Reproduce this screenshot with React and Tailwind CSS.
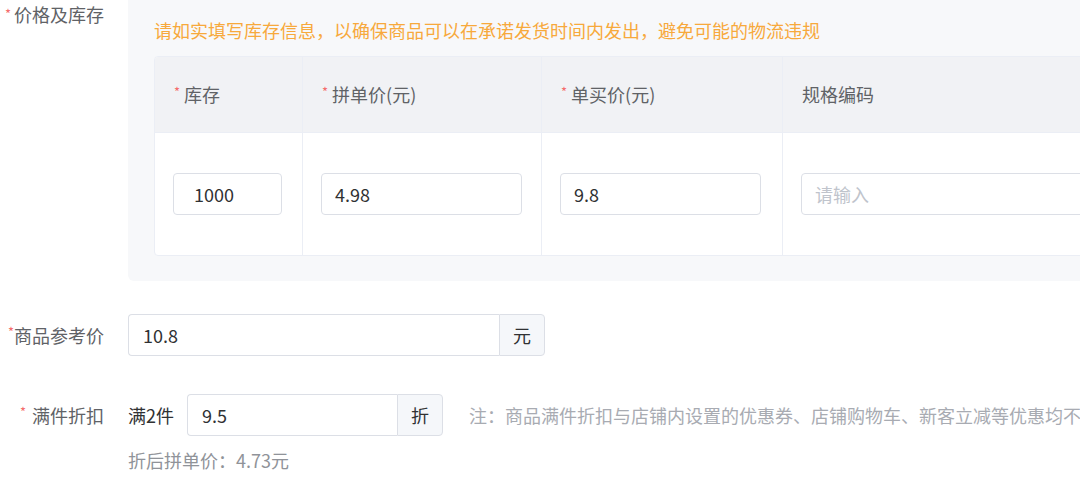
import React from "react";

const font = {
  fontFamily: '"Noto Sans CJK SC", "Noto Sans", sans-serif',
};

const Star = ({ className = "" }) => (
  <span className={`text-[#f56c6c] text-[13px] align-top ${className}`}>*</span>
);

const Field = ({ value, placeholder, width, pad = "px-[13px]" }) => (
  <div
    className={`h-[42px] ${width} ${pad} flex items-center bg-white border border-[#dcdfe6] rounded-[4px] text-[18px]`}
  >
    {value ? (
      <span className="text-[#303133]">{value}</span>
    ) : (
      <span className="text-[#c0c4cc]">{placeholder}</span>
    )}
  </div>
);

const AddonInput = ({ value, unit, width }) => (
  <div className={`flex shrink-0 h-[42px] ${width}`}>
    <div className="flex-1 flex items-center px-[14px] border border-r-0 border-[#dcdfe6] rounded-l-[4px] text-[18px] text-[#303133]">
      {value}
    </div>
    <div className="w-[46px] flex items-center justify-center bg-[#f5f7fa] border border-[#dcdfe6] rounded-r-[4px] text-[18px] text-[#303133]">
      {unit}
    </div>
  </div>
);

const columns = [
  { title: "库存", required: true, w: "w-[148px]", input: "w-[109px]", value: "1000", pad: "pl-5 pr-3" },
  { title: "拼单价(元)", required: true, w: "w-[239px]", input: "w-[201px]", value: "4.98" },
  { title: "单买价(元)", required: true, w: "w-[241px]", input: "w-[201px]", value: "9.8" },
  { title: "规格编码", required: false, w: "flex-1", input: "w-[400px]", placeholder: "请输入" },
];

export default function App() {
  return (
    <div className="w-[1080px] h-[477px] overflow-hidden bg-white" style={font}>
      {/* 价格及库存 */}
      <div className="flex">
        <div className="w-[128px] shrink-0 text-right pr-6 pt-px leading-[26px] text-[18px] text-[#606266]">
          <Star className="mr-[3px]" />
          价格及库存
        </div>
        <div className="w-[1000px] shrink-0 bg-[#f7f8fa] rounded-b-md pt-[17px] pl-[26px] pb-[25px]">
          <div className="leading-[26px] text-[18px] text-[#f7a93c] whitespace-nowrap">
            请如实填写库存信息，以确保商品可以在承诺发货时间内发出，避免可能的物流违规
          </div>
          <div className="mt-[13px] bg-white border border-[#ebeef5] rounded-[4px] overflow-hidden">
            <div className="flex h-[76px] bg-[#f1f2f5] border-b border-[#ebeef5]">
              {columns.map((c) => (
                <div
                  key={c.title}
                  className={`${c.w} shrink-0 flex items-center pl-[19px] border-r border-[#ebeef5] text-[18px] text-[#606266]`}
                >
                  {c.required && <Star className="mr-[4px] self-center -mt-[6px]" />}
                  {c.title}
                </div>
              ))}
            </div>
            <div className="flex h-[122px]">
              {columns.map((c) => (
                <div
                  key={c.title}
                  className={`${c.w} shrink-0 flex items-center pl-[18px] border-r border-[#ebeef5]`}
                >
                  <Field value={c.value} placeholder={c.placeholder} width={c.input} pad={c.pad} />
                </div>
              ))}
            </div>
          </div>
        </div>
      </div>

      {/* 商品参考价 */}
      <div className="flex items-center mt-[33px]">
        <div className="w-[128px] shrink-0 text-right pr-6 text-[18px] text-[#606266]">
          <Star />
          商品参考价
        </div>
        <AddonInput value="10.8" unit="元" width="w-[417px]" />
      </div>

      {/* 满件折扣 */}
      <div className="flex items-center mt-[38px] whitespace-nowrap">
        <div className="w-[128px] shrink-0 text-right pr-6 text-[18px] text-[#606266]">
          <Star className="mr-[6px]" />
          满件折扣
        </div>
        <span className="shrink-0 text-[18px] text-[#303133]">满2件</span>
        <div className="ml-[13px] shrink-0">
          <AddonInput value="9.5" unit="折" width="w-[256px]" />
        </div>
        <span className="ml-[26px] shrink-0 text-[18px] text-[#a8abb2]">
          注：商品满件折扣与店铺内设置的优惠券、店铺购物车、新客立减等优惠均不可叠加使用
        </span>
      </div>
      <div className="pl-[128px] mt-[11px] leading-[26px] text-[18px] text-[#909399]">
        折后拼单价：4.73元
      </div>
    </div>
  );
}
